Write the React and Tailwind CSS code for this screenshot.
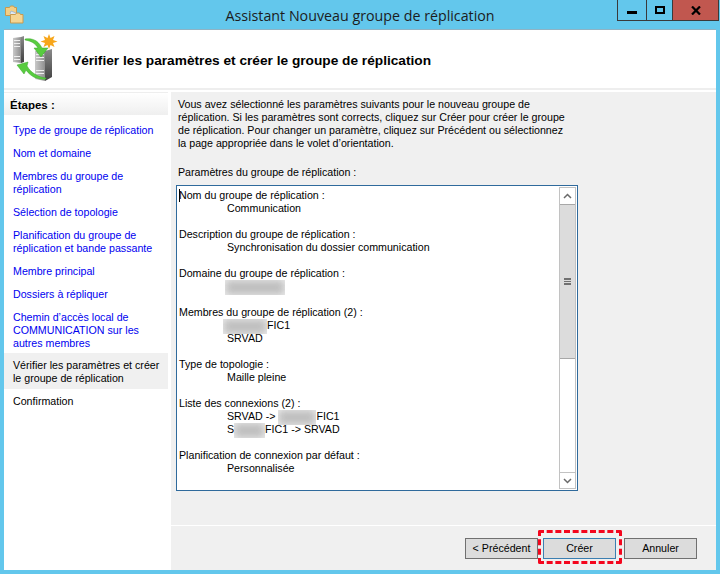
const steps = [
  { label: ["Type de groupe de réplication"] },
  { label: ["Nom et domaine"] },
  { label: ["Membres du groupe de", "réplication"] },
  { label: ["Sélection de topologie"] },
  { label: ["Planification du groupe de", "réplication et bande passante"] },
  { label: ["Membre principal"] },
  { label: ["Dossiers à répliquer"] },
  { label: ["Chemin d’accès local de", "COMMUNICATION sur les", "autres membres"] },
  { label: ["Vérifier les paramètres et créer", "le groupe de réplication"], current: true },
  { label: ["Confirmation"], plain: true },
];

function Blurred({ w }) {
  return (
    <span className={`inline-block h-[15px] -my-[2px] align-middle overflow-hidden bg-[#f2f2f2] ${w}`}>
      <span className="block w-full h-full bg-[#bdbdbd] blur-[4px]"></span>
    </span>
  );
}

function Entry({ title, children }) {
  return (
    <div className="mb-[13px]">
      <div className="h-[13px]">{title}</div>
      <div className="pl-[48px]">{children}</div>
    </div>
  );
}

function AppIcon() {
  return (
    <svg width="20" height="20" viewBox="0 0 20 20">
      <path d="M0.500 2.500h4l1-1.500h3l1 1.500h2v8h-11z" fill="#f3cf86" stroke="#c99a4e" />
      <path d="M6 6l5 2 3 5-4 1-5-5z" fill="#dfeaf6" stroke="#8fb0d4" strokeWidth="0.700" />
      <path d="M5.500 9.500h5l1-1.500h3l1 1.500h2.500v8.500h-12.500z" fill="#f5d592" stroke="#c99a4e" />
    </svg>
  );
}

function ServerIcon() {
  return (
    <svg width="46" height="50" viewBox="0 0 46 50">
      <defs>
        <linearGradient id="front" x1="0" y1="0" x2="1" y2="0">
          <stop offset="0" stopColor="#c9c9c9" />
          <stop offset="1" stopColor="#8f8f8f" />
        </linearGradient>
        <linearGradient id="side" x1="0" y1="0" x2="0" y2="1">
          <stop offset="0" stopColor="#8a8a8a" />
          <stop offset="1" stopColor="#3f3f3f" />
        </linearGradient>
      </defs>
      <path d="M1 4l8-1v26l-8-1z" fill="url(#front)" />
      <path d="M9 3l3-1v26l-3 1z" fill="url(#side)" />
      <path d="M2 6h6v1H2zM2 9h6v1H2zM2 12h6v1H2zM2 22h6v1H2zM2 25h6v1H2z" fill="#efefef" />
      <path d="M23 17h10v30l-10-2z" fill="url(#front)" />
      <path d="M33 17l7-2v28l-7 4z" fill="url(#side)" />
      <path d="M24 20h8v1h-8zM24 23h8v1h-8zM24 26h8v1h-8zM24 36h8v1h-8zM24 39h8v1h-8z" fill="#efefef" />
      <path d="M13 5c7-1 13 1 17 9h6l-7 9-7-9h4c-3-5-7-7-13-8z" fill="#58cc3f" stroke="#3aa52c" strokeWidth="0.500" />
      <path d="M34 45c-8 1-15-2-20-9l-2 4-7-9 11-3-1 4c4 7 11 11 19 12z" fill="#58cc3f" stroke="#3aa52c" strokeWidth="0.500" />
      <path d="M37 0l1.500 4 4-2-1.500 4 4.500 1.500-4.500 1.500 1.500 4-4-2-1.500 4-1.500-4-4 2 1.500-4-4.500-1.500 4.500-1.500-1.500-4 4 2z" fill="#f7a61b" />
    </svg>
  );
}

export default function App() {
  return (
    <div className="relative w-[720px] h-[574px] overflow-hidden flex flex-col bg-[#63c7ec] text-[10.67px] leading-[13px] text-black font-['Liberation_Sans',Arial,sans-serif]">
      {/* title bar */}
      <div className="relative h-[29px] flex items-center justify-center shrink-0">
        <div className="absolute left-[5px] top-[5px]">
          <AppIcon />
        </div>
        <div className="text-[14.250px] text-[#1c1c1c] font-['Open_Sans',sans-serif] pt-[1px]">
          Assistant Nouveau groupe de réplication
        </div>
        <div className="absolute left-[617px] top-0 h-[21px] flex border-x border-b border-[#3a3a3a]">
          <div className="w-[28px] flex items-center justify-center pt-[5px]">
            <div className="w-[10px] h-[3px] bg-black"></div>
          </div>
          <div className="w-[26px] flex items-center justify-center border-l border-[#3a3a3a]">
            <div className="w-[10px] h-[8px] border-2 border-black"></div>
          </div>
          <div className="w-[46px] flex items-center justify-center border-l border-[#3a3a3a] bg-[#c1574f]">
            <svg width="10" height="9" viewBox="0 0 10 9">
              <path d="M1 0.500L9 8.500M9 0.500L1 8.500" stroke="#000" strokeWidth="2.200" />
            </svg>
          </div>
        </div>
      </div>

      {/* client area */}
      <div className="flex-1 mx-[4px] mb-[4px] bg-white border-t border-[#8fb3c4] flex flex-col min-h-0">
        <div className="h-[60px] shrink-0 flex items-center border-b-2 border-[#eeeeee]">
          <div className="w-[68px] pl-[8px] shrink-0">
            <ServerIcon />
          </div>
          <div className="text-[13.700px] font-bold pt-[3px]">
            Vérifier les paramètres et créer le groupe de réplication
          </div>
        </div>

        <div className="flex-1 flex min-h-0 pt-[2px]">
          {/* steps */}
          <div className="w-[164px] shrink-0 mr-[3px] border-t border-[#eeeeee]">
            <div className="h-[22px] flex items-center pl-[6px] pt-[2px] text-[11.500px] font-bold bg-gradient-to-b from-white to-[#efefef]">
              Étapes :
            </div>
            <div className="pt-[4px]">
              {steps.map((s, i) => (
                <div
                  key={i}
                  className={`pl-[9px] ${
                    s.current
                      ? "-mt-[2px] pt-[6px] pb-[4px] bg-[#f0f0f0] text-black"
                      : s.plain
                        ? "pt-[6px] pb-[5px] text-black"
                        : "py-[5px] text-[#0000f0]"
                  }`}
                >
                  {s.label.map((line) => (
                    <div key={line} className="h-[13px] whitespace-nowrap">{line}</div>
                  ))}
                </div>
              ))}
            </div>
          </div>

          {/* right panel */}
          <div className="flex-1 flex flex-col bg-[#f0f0f0] min-w-0">
            <div className="flex-1 pl-[5px] pt-[6px] min-h-0">
              <div className="pl-[2px]">
                <div>Vous avez sélectionné les paramètres suivants pour le nouveau groupe de</div>
                <div>réplication. Si les paramètres sont corrects, cliquez sur Créer pour créer le groupe</div>
                <div>de réplication. Pour changer un paramètre, cliquez sur Précédent ou sélectionnez</div>
                <div>la page appropriée dans le volet d’orientation.</div>
                <div className="mt-[16px] mb-[6px]">Paramètres du groupe de réplication :</div>
              </div>

              <div className="relative flex w-[402px] h-[306px] bg-white border border-[#2f6a9c] p-[1px]">
                <div className="flex-1 pl-[1px] pt-[2px] overflow-hidden">
                  <div className="absolute left-[2px] top-[3px] w-px h-[13px] bg-black"></div>
                  <Entry title="Nom du groupe de réplication :">Communication</Entry>
                  <Entry title="Description du groupe de réplication :">Synchronisation du dossier communication</Entry>
                  <Entry title="Domaine du groupe de réplication :">
                    <div className="h-[13px] -ml-[2px]"><Blurred w="w-[60px]" /></div>
                  </Entry>
                  <Entry title="Membres du groupe de réplication (2) :">
                    <div className="h-[13px] -ml-[4px] whitespace-nowrap"><Blurred w="w-[44px]" />FIC1</div>
                    <div className="h-[13px]">SRVAD</div>
                  </Entry>
                  <Entry title="Type de topologie :">Maille pleine</Entry>
                  <Entry title="Liste des connexions (2) :">
                    <div className="h-[13px] whitespace-nowrap">SRVAD -&gt; <Blurred w="w-[38px]" />FIC1</div>
                    <div className="h-[13px] whitespace-nowrap">S<Blurred w="w-[31px]" />FIC1 -&gt; SRVAD</div>
                  </Entry>
                  <Entry title="Planification de connexion par défaut :">Personnalisée</Entry>
                </div>

                {/* scrollbar */}
                <div className="w-[17px] shrink-0 flex flex-col bg-white border-x border-[#c2c2c2]">
                  <div className="h-[17px] flex items-center justify-center border-t border-[#c2c2c2]">
                    <svg width="9" height="6" viewBox="0 0 9 6">
                      <path d="M1 5L4.500 1.500L8 5" fill="none" stroke="#6a6a6a" strokeWidth="1.500" />
                    </svg>
                  </div>
                  <div className="h-[155px] bg-[#dcdcdc] border-y border-[#a8a8a8] flex flex-col items-center justify-center gap-[1px]">
                    <div className="w-[7px] h-[1.500px] bg-[#707070]"></div>
                    <div className="w-[7px] h-[1.500px] bg-[#707070]"></div>
                    <div className="w-[7px] h-[1.500px] bg-[#707070]"></div>
                  </div>
                  <div className="flex-1"></div>
                  <div className="h-[17px] flex items-center justify-center border-y border-[#c2c2c2]">
                    <svg width="9" height="6" viewBox="0 0 9 6">
                      <path d="M1 1L4.500 4.500L8 1" fill="none" stroke="#6a6a6a" strokeWidth="1.500" />
                    </svg>
                  </div>
                </div>
              </div>
            </div>

            {/* footer */}
            <div className="h-[45px] shrink-0 border-t border-white flex items-start pt-[12px] pl-[294px]">
              <button className="w-[73px] h-[21px] bg-[#dcdcdc] border border-[#707070] text-black">&lt; Précédent</button>
              <button className="w-[73px] h-[21px] ml-[5px] bg-[#dcdcdc] border border-[#3c7fb1] text-black">Créer</button>
              <button className="w-[73px] h-[21px] ml-[8px] bg-[#dcdcdc] border border-[#707070] text-black">Annuler</button>
            </div>
          </div>
        </div>
      </div>

      {/* red highlight round the button */}
      <div className="absolute left-[538px] top-[530px] w-[84px] h-[34px] border-[3px] border-dashed border-[#f4061e] rounded-[2px]"></div>
    </div>
  );
}
